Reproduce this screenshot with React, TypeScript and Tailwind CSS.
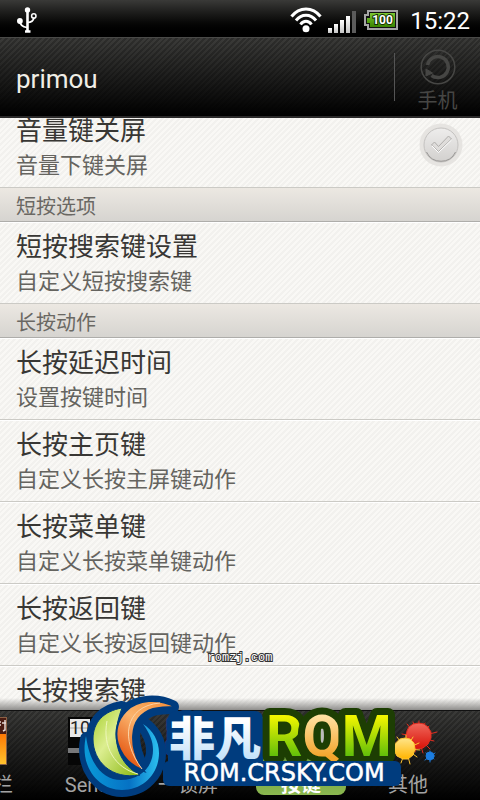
import type { ReactNode } from "react";
import clsx from "clsx";

type Entry = {
  title: string;
  summary: string;
  checkable?: boolean;
};

type Section = {
  heading?: string;
  entries: Entry[];
};

type Tab = {
  label: string;
  width: string;
  icon: ReactNode;
  active?: boolean;
};

const sections: Section[] = [
  {
    entries: [{ title: "音量键关屏", summary: "音量下键关屏", checkable: true }],
  },
  {
    heading: "短按选项",
    entries: [{ title: "短按搜索键设置", summary: "自定义短按搜索键" }],
  },
  {
    heading: "长按动作",
    entries: [
      { title: "长按延迟时间", summary: "设置按键时间" },
      { title: "长按主页键", summary: "自定义长按主屏键动作" },
      { title: "长按菜单键", summary: "自定义长按菜单键动作" },
      { title: "长按返回键", summary: "自定义长按返回键动作" },
      { title: "长按搜索键", summary: "自定义长按搜索键动作" },
    ],
  },
];

const UsbIcon = () => (
  <svg viewBox="0 0 20 26" className="h-[26px] w-5" fill="none" stroke="#fff">
    <path d="M10.5 4v20" strokeWidth="2.6" />
    <path d="M3 14c0 4 3 6 7 6.500M10.500 15.500c4 0 6-2 6.500-5" strokeWidth="1.700" />
    <circle cx="10.500" cy="3" r="2.700" fill="#fff" stroke="none" />
    <circle cx="2.900" cy="14" r="2.900" fill="#fff" stroke="none" />
    <circle cx="16.800" cy="9" r="2.200" strokeWidth="1.500" />
    <path d="M8 24.500h5.500" strokeWidth="2.500" />
  </svg>
);

const WifiIcon = () => (
  <svg viewBox="0 0 32 26" className="h-[26px] w-8" fill="none" stroke="#fff" strokeWidth="3">
    <path d="M1.500 9.500C9.500-.5 22.500-.5 30.500 9.500" />
    <path d="M6 13.500c5.500-7 14.500-7 20 0" />
    <path d="M10.500 17.500c3-4.200 8-4.200 11 0" />
    <circle cx="16" cy="21.800" r="3.500" fill="#fff" stroke="none" />
  </svg>
);

const SignalIcon = () => (
  <svg viewBox="0 0 28 22" className="h-[22px] w-7">
    <defs>
      <linearGradient id="bars" x1="0" y1="0" x2="0" y2="1">
        <stop offset="0" stopColor="#fff" />
        <stop offset="1" stopColor="#c4c4c4" />
      </linearGradient>
    </defs>
    <g fill="url(#bars)">
      <rect x="0" y="17" width="4" height="5" />
      <rect x="6" y="13" width="4" height="9" />
      <rect x="12" y="9" width="4" height="13" />
      <rect x="18" y="5" width="4" height="17" />
    </g>
    <rect x="24" y="0" width="4" height="22" fill="#5b5b5b" />
  </svg>
);

const BatteryIcon = () => (
  <svg viewBox="0 0 34 20" className="h-5 w-[34px]">
    <defs>
      <linearGradient id="charge" x1="0" y1="0" x2="0" y2="1">
        <stop offset="0" stopColor="#7cc832" />
        <stop offset="1" stopColor="#3a8500" />
      </linearGradient>
    </defs>
    <path d="M4 1h29v18H4v-4H1V5h3z" fill="#111" stroke="#a5a5a5" strokeWidth="2" />
    <path d="M6 3h25v14H6v-4H3V8h3z" fill="url(#charge)" />
    <text
      x="18.500"
      y="14"
      textAnchor="middle"
      className="fill-white stroke-[#123000] font-['Roboto','Liberation_Sans',sans-serif] text-[12px] font-bold"
      strokeWidth="2"
      paintOrder="stroke"
    >
      100
    </text>
  </svg>
);

const RefreshIcon = () => (
  <svg viewBox="0 0 36 36" className="size-9" fill="none" stroke="#464644">
    <circle cx="18" cy="18" r="16.800" strokeWidth="1.500" />
    <path d="M7.500 16a10.500 10.500 0 1 1 4 10.500" strokeWidth="3.500" />
    <path d="M6 20l0 7 6.500-3z" fill="#464644" strokeWidth="1" />
  </svg>
);

const CheckMark = () => (
  <svg viewBox="0 0 44 44" className="pointer-events-none col-start-1 row-start-1 size-11">
    <defs>
      <linearGradient id="knob" x1="0" y1="0" x2="0" y2="1">
        <stop offset="0" stopColor="#eeedec" />
        <stop offset="1" stopColor="#d2d0ce" />
      </linearGradient>
    </defs>
    <circle cx="22" cy="22" r="21.500" fill="#e6e4e1" />
    <circle cx="22" cy="22" r="17" fill="url(#knob)" stroke="#c4c2c0" />
    <path d="M7.500 29a16 16 0 0 0 29 0" fill="none" stroke="#9b9997" />
    <path
      d="M12.500 22l3-3 4 4.500 10-10.500 3 3L19.500 28.500z"
      fill="#dfdddb"
      stroke="#b0aeac"
    />
    <path d="M13 23l6.500 6.500L32.500 17" fill="none" stroke="#fff" />
  </svg>
);

const StatusBarIcon = () => (
  <svg viewBox="0 0 48 48" className="size-12">
    <defs>
      <linearGradient id="sunset" x1="0" y1="0" x2="0" y2="1">
        <stop offset="0.3" stopColor="#ff7200" />
        <stop offset="1" stopColor="#ffc52e" />
      </linearGradient>
    </defs>
    <rect width="48" height="48" fill="url(#sunset)" />
    <rect width="48" height="17" fill="#4a1c12" />
    <path d="M39 5h3M38 8h4M38 12h3M43 6h4M46 3v10l-2 1" stroke="#e6d9d4" strokeWidth="1.500" fill="none" />
    <rect x=".5" y=".5" width="47" height="47" fill="none" stroke="#8a6045" />
  </svg>
);

const ClockIcon = () => (
  <svg viewBox="0 0 48 48" className="size-12">
    <rect width="48" height="48" fill="#060606" />
    <rect x="2" y="2" width="20" height="18" fill="#e9e9e9" />
    <rect x="26" y="2" width="20" height="18" fill="#e9e9e9" />
    <path d="M2 11h20" stroke="#aaa" />
    <text
      x="2"
      y="17"
      className="fill-[#222] font-['Roboto','Liberation_Sans',sans-serif] text-[18px]"
    >
      10
    </text>
    <rect y="31" width="48" height="5" fill="#77787a" />
  </svg>
);

const LockIcon = () => (
  <svg viewBox="0 0 48 48" className="size-12" fill="none" stroke="#8d8d8d" strokeWidth="4">
    <path d="M8 44l16-14 16 14" />
    <circle cx="24" cy="20" r="8" />
  </svg>
);

const KeysIcon = () => (
  <svg viewBox="0 0 48 48" className="size-12">
    <path d="M2 40l9-16 9 16z" fill="#e8e8e8" />
    <rect x="26" y="14" width="5" height="20" fill="#555" />
    <rect x="44" y="12" width="4" height="14" fill="#bbb" />
  </svg>
);

const SplashIcon = () => (
  <svg viewBox="0 0 48 48" className="size-12 overflow-visible">
    <defs>
      <linearGradient id="red" x1="0" y1="0" x2="0" y2="1">
        <stop offset="0" stopColor="#f0685c" />
        <stop offset="1" stopColor="#d81208" />
      </linearGradient>
      <linearGradient id="yellow" x1="0" y1="0" x2="0" y2="1">
        <stop offset="0" stopColor="#ffe58a" />
        <stop offset="1" stopColor="#ffb400" />
      </linearGradient>
    </defs>
    <g stroke="#e02c20" strokeWidth="1" strokeLinecap="round">
      <path d="M34 20L23 7M34 20l-5-15M34 20L35 4M34 20l7-14M34 20l11-11M34 20l19-5M34 20l16 4M34 20l12 12M34 20l5 16M34 20l-3 15M34 20L18 17" />
      <path
        d="M25 10l4-3 6-1 5 1 4 3 3 5 0 6-3 6-5 4-6 1-5-2-5-5-1-6 1-5z"
        fill="url(#red)"
        strokeLinejoin="round"
      />
    </g>
    <g stroke="#ffc531" strokeWidth="1" strokeLinecap="round">
      <path d="M22 32l-9-12M22 32l0-14M22 32l7-12M22 32l13-6M22 32l14 1M22 32l11 8M22 32l4 15M22 32l-5 14" />
      <path
        d="M16 22l5-1 5 1 4 4 1 6-2 6-5 4-5 0-6-3-3-6 1-6z"
        fill="url(#yellow)"
        strokeLinejoin="round"
      />
    </g>
    <g stroke="#1c7de0" strokeWidth="1" strokeLinecap="round">
      <path d="M42 36l8 6M46 34v11M51 36l-10 7" />
      <circle cx="46" cy="39" r="4" fill="#1c7de0" />
    </g>
  </svg>
);

const tabs: Tab[] = [
  { label: "状态栏", width: "w-[106px]", icon: <StatusBarIcon /> },
  { label: "Sense", width: "w-[112px]", icon: <ClockIcon /> },
  { label: "一锁屏", width: "w-20", icon: <LockIcon /> },
  { label: "按键", width: "w-[146px]", icon: <KeysIcon />, active: true },
  { label: "其他", width: "w-[68px]", icon: <SplashIcon /> },
];

const StatusBar = () => (
  <div className="flex h-[37px] shrink-0 items-center justify-between bg-linear-to-b from-[#3a3a38] to-black pt-0.5 pr-2.5 pl-[17px]">
    <UsbIcon />
    <div className="flex items-center text-white">
      <WifiIcon />
      <span className="ml-1.5 pt-1">
        <SignalIcon />
      </span>
      <span className="ml-2">
        <BatteryIcon />
      </span>
      <time className="ml-3 pt-0.5 text-[24px] leading-8">15:22</time>
    </div>
  </div>
);

const Header = () => (
  <header className="flex h-[81px] shrink-0 items-center justify-between border-t border-b-2 border-t-[#4a4a48] border-b-[#2b2a2a] bg-[repeating-linear-gradient(135deg,rgba(0,0,0,0.22)_0px,rgba(0,0,0,0.22)_2px,transparent_2px,transparent_4px),linear-gradient(#3b3b39,#000)]">
    <h1 className="pt-1 pl-4 text-[26px] leading-8 text-[#f0eee6]">primou</h1>
    <div className="flex h-12 w-[86px] items-center justify-center border-l border-[#555]">
      <button type="button" className="flex flex-col items-center pt-2.5 text-[#464644]">
        <RefreshIcon />
        <span className="pt-0.5 text-[20px] leading-7">手机</span>
      </button>
    </div>
  </header>
);

const SettingRow = ({ entry }: { entry: Entry }) => {
  const text = (
    <span className="block">
      <span className="block text-[26px] leading-9 text-[#383734]">{entry.title}</span>
      <span className="block text-[22px] leading-[34px] text-[#65645f]">{entry.summary}</span>
    </span>
  );
  const row =
    "flex h-[82px] w-full items-start justify-between border-t border-b border-t-white border-b-[#cbcac5] pt-1.5 pr-[17px] pl-4 text-left";

  if (entry.checkable) {
    return (
      <label className={row}>
        {text}
        <span className="mt-2.5 grid">
          <input
            type="checkbox"
            className="col-start-1 row-start-1 size-11 appearance-none rounded-full"
          />
          <CheckMark />
        </span>
      </label>
    );
  }

  return (
    <button type="button" className={row}>
      {text}
    </button>
  );
};

const TabItem = ({ tab }: { tab: Tab }) => (
  <button
    type="button"
    className={clsx("flex shrink-0 justify-center pt-1.5", tab.width)}
  >
    <span
      className={clsx(
        "flex h-[78px] flex-col items-center rounded-lg",
        tab.active
          ? "w-[90px] bg-linear-to-b from-[#4f7a2c] to-[#8bb850] font-bold text-white"
          : "text-[#a3a3a3]",
      )}
    >
      <span className="shrink-0">{tab.icon}</span>
      <span className="mt-1.5 text-[20px] leading-7 whitespace-nowrap">{tab.label}</span>
    </span>
  </button>
);

const Logo = () => (
  <svg
    viewBox="0 0 320 104"
    className="pointer-events-none absolute bottom-0.5 left-1/2 h-[104px] w-80 -translate-x-1/2 overflow-visible"
  >
    <defs>
      <linearGradient id="orange" x1="1" y1="0" x2="0.3" y2="1">
        <stop offset="0" stopColor="#f58a32" />
        <stop offset="0.5" stopColor="#fbb36c" />
        <stop offset="1" stopColor="#e2500c" />
      </linearGradient>
      <linearGradient id="lime" x1="0" y1="0" x2="1" y2="1">
        <stop offset="0" stopColor="#a6cf2c" />
        <stop offset="0.4" stopColor="#dcee90" />
        <stop offset="1" stopColor="#86b50c" />
      </linearGradient>
      <linearGradient id="sky" x1="0" y1="0" x2="1" y2="0">
        <stop offset="0" stopColor="#0a9ad8" />
        <stop offset="0.6" stopColor="#0672c4" />
        <stop offset="1" stopColor="#2cc0f0" />
      </linearGradient>
      <linearGradient id="ice" x1="0" y1="0" x2="0" y2="1">
        <stop offset="0.3" stopColor="#fff" />
        <stop offset="1" stopColor="#b5dbf8" />
      </linearGradient>
      <linearGradient id="leaf" x1="0" y1="0" x2="0" y2="1">
        <stop offset="0.2" stopColor="#f2f500" />
        <stop offset="0.8" stopColor="#5fbe0a" />
      </linearGradient>
      <linearGradient id="ring" x1="0" y1="0" x2="0" y2="1">
        <stop offset="0.2" stopColor="#ffe0a0" />
        <stop offset="0.8" stopColor="#f2a52c" />
      </linearGradient>
    </defs>

    {/* Swirl */}
    <g stroke="#003c7e" strokeWidth="14" strokeLinejoin="round" fill="#003c7e">
      <path d="M7 45C2 72 18 96 42 96c22 0 37-17 37-37 0-12-6-23-16-29 7 10 10 17 10 26 0 18-14 30-32 30C24 86 10 72 7 45z" />
      <path d="M42 14C24 17 13 28 13 45c0 22 18 41 47 36C42 72 28 50 42 14z" />
      <path d="M92 13C78 6 58 7 46 17 28 35 40 66 64 77 52 58 44 24 73 15c8-2 14-2 19-2z" />
    </g>
    <path
      d="M6 42C-1 72 18 96 42 96c22 0 37-17 37-37 0-12-6-23-16-29 7 10 10 17 10 26 0 18-14 30-32 30C24 86 10 72 6 42z"
      fill="url(#sky)"
    />
    <path
      d="M42 14C24 17 13 28 13 45c0 22 18 41 47 36C42 72 28 50 42 14z"
      fill="url(#lime)"
      stroke="#003c7e"
      strokeWidth="1"
    />
    <path d="M27 27c-5 26 8 47 31 53" fill="none" stroke="#eef7bb" />
    <path
      d="M96 13C78 4 58 5 46 17 28 35 36 66 64 77 50 56 46 24 73 15c8-2 16-2 23-2z"
      fill="url(#orange)"
      stroke="#003c7e"
      strokeWidth="2"
    />
    <path d="M80 9C44 12 40 46 62 75" fill="none" stroke="#fcd3a6" />

    {/* Wordmark */}
    <g strokeLinejoin="round" paintOrder="stroke">
      <rect x="88" y="17" width="95" height="60" rx="8" fill="#003c7e" />
      <text
        x="89"
        y="61"
        fill="url(#ice)"
        stroke="#003c7e"
        strokeWidth="11"
        className="font-['Noto_Sans_CJK_SC',sans-serif] text-[46px] font-black"
      >
        非凡
      </text>
      <text
        x="186"
        y="62"
        fill="url(#leaf)"
        stroke="#1d3e03"
        strokeWidth="14"
        className="font-['Roboto','Liberation_Sans',sans-serif] text-[57px] font-bold"
      >
        R<tspan fill="url(#ring)">Q</tspan>M
      </text>
      <rect x="83" y="67" width="238" height="25" rx="6" fill="#003c7e" />
      <text
        x="204"
        y="87"
        textAnchor="middle"
        fill="#fff"
        stroke="#fff"
        strokeWidth="0.500"
        className="font-['DejaVu_Sans',sans-serif] text-[24px]"
      >
        ROM.CRSKY.COM
      </text>
    </g>
  </svg>
);

const App = () => {
  return (
    <div className="relative flex h-screen flex-col overflow-hidden bg-black font-['Roboto','Noto_Sans_CJK_SC',sans-serif]">
      <StatusBar />
      <Header />

      {/* Settings list, scrolled slightly past the first row */}
      <main className="relative min-h-0 flex-1 overflow-hidden bg-[repeating-linear-gradient(135deg,#f9f8f5_0px,#f9f8f5_2px,#f2f1ee_2px,#f2f1ee_4px)]">
        <div className="-mt-3">
          {sections.map((section, index) => (
            <section key={index}>
              {section.heading && (
                <h2 className="h-[34px] border-b border-[#aeadaa] bg-linear-to-b from-[#ece8e2] to-[#d6d4d0] pt-px pl-4 text-[20px] leading-9 text-[#6a6863]">
                  {section.heading}
                </h2>
              )}
              {section.entries.map((entry) => (
                <SettingRow key={entry.title} entry={entry} />
              ))}
            </section>
          ))}
        </div>
        <div className="pointer-events-none absolute inset-x-0 bottom-0 h-3 bg-linear-to-b from-transparent to-[#8f8e8c]" />
      </main>

      {/* Tabs */}
      <nav className="flex h-[90px] shrink-0 overflow-hidden border-t border-[#111] bg-[repeating-linear-gradient(135deg,rgba(0,0,0,0.22)_0px,rgba(0,0,0,0.22)_2px,transparent_2px,transparent_4px),linear-gradient(#3b3b39,#000)]">
        <div className="-ml-[70px] flex">
          {tabs.map((tab) => (
            <TabItem key={tab.label} tab={tab} />
          ))}
        </div>
      </nav>

      {/* Watermarks */}
      <span className="pointer-events-none absolute bottom-[134px] left-1/2 -translate-x-1/2 font-['Liberation_Mono',monospace] text-[12px] leading-4 text-white [paint-order:stroke] [-webkit-text-stroke:2px_#333]">
        romzj.com
      </span>
      <Logo />
    </div>
  );
};

export default App;
